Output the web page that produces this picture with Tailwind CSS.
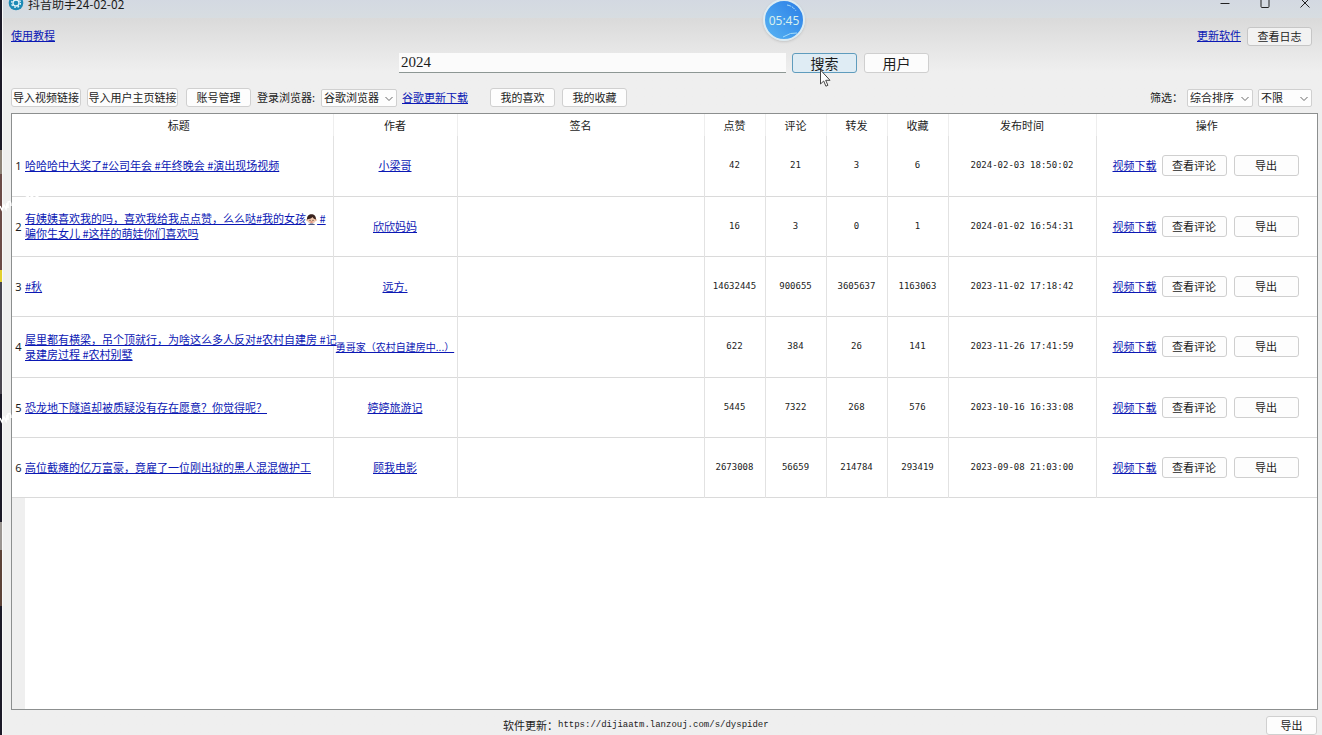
<!DOCTYPE html>
<html lang="zh-CN">
<head>
<meta charset="utf-8">
<meta name="viewport" content="width=device-width, initial-scale=1">
<title>抖音助手24-02-02</title>
<script src="https://cdn.jsdelivr.net/npm/@tailwindcss/browser@4"></script>
</head>
<body class="relative flex h-screen overflow-hidden bg-[#efefef] font-['Noto_Sans_CJK_SC',sans-serif] text-[11px] leading-[15px] text-[#1c1c1c]">
<!-- desktop edge behind the window -->
<div class="flex w-[2px] shrink-0 flex-col bg-[#1c1a28]">
  <div class="h-[150px]"></div><div class="h-6 bg-[#8d8378]"></div><div class="h-24 bg-[#6b4b48]"></div><div class="h-3 bg-[#e2cf2e]"></div><div class="h-28 bg-[#4a4650]"></div><div class="h-32"></div><div class="h-7 bg-[#9a9490]"></div><div class="h-14 bg-[#5d4238]"></div>
</div>
<div class="flex min-w-0 flex-1 flex-col border-l border-[#fafafa]">
  <header class="-mt-3 flex h-[30px] shrink-0 items-center bg-linear-to-b from-[#d1d6e2] to-[#d7dde1] pl-1">
    <svg class="ml-px size-4" viewBox="0 0 16 16" aria-hidden="true"><circle cx="8" cy="8" r="7.3" fill="#1c8ab6"/><circle cx="8" cy="8" r="3" fill="none" stroke="#e8f6fb" stroke-width="1.3"/><circle cx="8" cy="8" r="4.400" fill="none" stroke="#e8f6fb" stroke-width="1.300" stroke-dasharray="1.730 1.730"/></svg>
    <h1 class="ml-1 text-[12px]">抖音助手24-02-02</h1>
    <div class="mr-[-3px] ml-auto flex">
      <button aria-label="最小化" class="flex w-10 justify-center"><svg class="size-3" viewBox="0 0 12 12" fill="none" stroke="#222"><path d="M1.500 6.500h9"/></svg></button>
      <button aria-label="最大化" class="flex w-10 justify-center"><svg class="size-3" viewBox="0 0 12 12" fill="none" stroke="#222"><rect x="2" y="1.500" width="8" height="9" rx="1"/></svg></button>
      <button aria-label="关闭" class="flex w-10 justify-center"><svg class="size-3" viewBox="0 0 12 12" fill="none" stroke="#222"><path d="M1.500 1.500l9 9M10.500 1.500l-9 9"/></svg></button>
    </div>
  </header>
  <div class="flex min-h-0 flex-1 flex-col bg-linear-to-b from-[#dadada] to-[#efefef] to-[54px] pr-1 pl-2">
    <div class="mt-2 flex h-5 shrink-0 items-start pr-[6px]">
      <a href="#" class="leading-[18px] text-[#0b18b4] underline">使用教程</a>
      <a href="#" class="ml-auto leading-[18px] text-[#0b18b4] underline">更新软件</a>
      <button class="mt-px ml-[6px] h-[19px] w-[65px] rounded-[3px] border border-[#c6c6c6] bg-[#f2f2f2]">查看日志</button>
    </div>
    <form class="mt-[7px] ml-[388px] flex h-5 shrink-0 items-center">
      <input aria-label="关键词" value="2024" class="h-5 w-[387px] border-b border-[#8d9794] bg-[#fbfbfb] pl-[2px] font-['Liberation_Serif',serif] text-[15px] outline-none">
      <button type="button" class="ml-[6px] h-5 w-[65px] rounded-[3px] border border-[#5f9cbd] bg-[#dfecf4] text-[14px] leading-[17px]">搜索</button>
      <button type="button" class="ml-[7px] h-5 w-[65px] rounded-[3px] border border-[#cfcfcf] bg-[#fcfcfc] text-[14px] leading-[17px]">用户</button>
    </form>
    <div class="mt-[15px] flex h-[19px] shrink-0 items-center whitespace-nowrap pr-[6px]">
      <button class="h-[19px] w-[70px] rounded-[3px] border border-[#d0d0d0] bg-[#fdfdfd]">导入视频链接</button>
      <button class="ml-[6px] h-[19px] w-[91px] rounded-[3px] border border-[#d0d0d0] bg-[#fdfdfd]">导入用户主页链接</button>
      <button class="ml-[8px] h-[19px] w-[65px] rounded-[3px] border border-[#d0d0d0] bg-[#fdfdfd]">账号管理</button>
      <label for="browser" class="ml-[6px] w-[64px]">登录浏览器:</label>
      <div class="relative"><select id="browser" class="h-[18px] w-[76px] appearance-none rounded-[2px] border border-[#d0d0d0] bg-[#fdfdfd] pl-[2px]"><option>谷歌浏览器</option></select><svg class="pointer-events-none absolute top-[6px] right-1 h-2 w-2" viewBox="0 0 8 8" fill="none" stroke="#666"><path d="M.5 2l3.500 3.500L7.500 2"/></svg></div>
      <a href="#" class="ml-[5px] w-[88px] text-[#0b18b4] underline">谷歌更新下载</a>
      <button class="h-[19px] w-[65px] rounded-[3px] border border-[#d0d0d0] bg-[#fdfdfd]">我的喜欢</button>
      <button class="ml-[7px] h-[19px] w-[65px] rounded-[3px] border border-[#d0d0d0] bg-[#fdfdfd]">我的收藏</button>
      <label for="sort" class="ml-auto">筛选：</label>
      <div class="relative ml-1"><select id="sort" class="h-[18px] w-[66px] appearance-none rounded-[2px] border border-[#d0d0d0] bg-[#fdfdfd] pl-[2px]"><option>综合排序</option></select><svg class="pointer-events-none absolute top-[6px] right-1 h-2 w-2" viewBox="0 0 8 8" fill="none" stroke="#666"><path d="M.5 2l3.500 3.500L7.500 2"/></svg></div>
      <div class="relative ml-[5px]"><select aria-label="时间" class="h-[18px] w-[54px] appearance-none rounded-[2px] border border-[#d0d0d0] bg-[#fdfdfd] pl-[2px]"><option>不限</option></select><svg class="pointer-events-none absolute top-[6px] right-1 h-2 w-2" viewBox="0 0 8 8" fill="none" stroke="#666"><path d="M.5 2l3.500 3.500L7.500 2"/></svg></div>
    </div>
    <main class="mt-[6px] flex min-h-0 flex-1 flex-col border border-[#8c8f8f] bg-white">
      <table class="h-[384px] w-full shrink-0 table-fixed border-collapse text-center [&_tbody_tr]:border-b [&_tbody_tr]:border-[#dadada] [&_td+td+td]:border-l [&_td+td+td]:border-[#e2e2e2] [&_th+th+th]:border-l [&_th+th+th]:border-[#eeeeee]">
        <colgroup><col class="w-[13px]"><col class="w-[308px]"><col class="w-[124px]"><col><col class="w-[61px]"><col class="w-[61px]"><col class="w-[61px]"><col class="w-[61px]"><col class="w-[148px]"><col class="w-[221px]"></colgroup>
        <thead><tr class="h-[22px] [&>th]:font-normal"><th></th><th>标题</th><th>作者</th><th>签名</th><th>点赞</th><th>评论</th><th>转发</th><th>收藏</th><th>发布时间</th><th>操作</th></tr></thead>
        <tbody id="rows"></tbody>
      </table>
      <div class="w-[13px] flex-1 bg-[#efefef]"></div>
    </main>
    <footer class="relative flex h-[25px] shrink-0 items-center pt-[6px] pr-px">
      <p class="ml-[492px] flex items-center">软件更新：<span class="font-['Liberation_Mono',monospace] text-[9px]">https://dijiaatm.lanzouj.com/s/dyspider</span></p>
      <button class="ml-auto h-[19px] w-[51px] rounded-[3px] border border-[#d0d0d0] bg-[#fdfdfd]">导出</button>
    </footer>
  </div>
</div>
<!-- translucent watermark fragments -->
<svg class="pointer-events-none absolute top-[193px] left-0 h-5 w-11" viewBox="0 0 44 20" fill="none" stroke="#fff" stroke-width="1.500" aria-hidden="true"><path d="M0 13l2 4 2-5 2 4 1-6M8 15V9q3-2 3 4M25 5l3-2 1 3 3-3 2 3 3-3 2 2"/></svg>
<svg class="pointer-events-none absolute top-[406px] left-0 h-5 w-11" viewBox="0 0 44 20" fill="none" stroke="#fff" stroke-width="1.500" aria-hidden="true"><path d="M0 12l2 4 2-5 2 4 1-6M8 14V8q3-2 3 4"/></svg>
<!-- floating recorder timer -->
<div class="absolute top-[-1px] left-[763px] flex size-[42px] items-center justify-center rounded-full border-2 border-[#dcebf2] bg-linear-to-tr from-[#58b4f3] to-[#2b7de6] font-['Noto_Sans',sans-serif] text-[12px] text-[#d8f0ee] shadow">05:45
  <svg class="absolute inset-0" viewBox="0 0 38 38" fill="none" stroke="#a5dcf8" aria-hidden="true"><path d="M22 4q6 1 9 6" stroke-dasharray="4 1"/><path d="M18 36q8-5 14-4"/></svg>
</div>
<svg class="absolute top-[69px] left-[819px] h-[19px] w-3" viewBox="0 0 12 19" fill="#fff" stroke="#444" aria-hidden="true"><path d="M1.500 1v14l3.200-3 2.200 5.200 2-.9-2.200-5H11z"/></svg>
<script>
const rows = [
  ['哈哈哈中大奖了#公司年会 #年终晚会 #演出现场视频','小梁哥','42','21','3','6','2024-02-03 18:50:02'],
  ['有姨姨喜欢我的吗，喜欢我给我点点赞，么么哒#我的女孩<svg class="inline size-[11px] align-[-2px]" viewBox="0 0 11 11"><circle cx="1.500" cy="6" r="1.300" fill="#e9b99b"/><circle cx="9.500" cy="6" r="1.300" fill="#e9b99b"/><circle cx="5.500" cy="5.500" r="4" fill="#f3c9ae"/><path d="M1 5.500C.8 2 3 .3 5.500.3S10.200 2 10 5.500C8 5 7 4 6.500 3 5.500 4.500 3 5 1 5.500z" fill="#3a2420"/><path d="M2 11c.5-2 6.500-2 7 0z" fill="#4a5a88"/><circle cx="4" cy="6.300" r=".5"/><circle cx="7" cy="6.300" r=".5"/><path d="M4.500 8h2" stroke="#b33" stroke-width=".7"/></svg> #<br>骗你生女儿 #这样的萌娃你们喜欢吗','欣欣妈妈','16','3','0','1','2024-01-02 16:54:31'],
  ['#秋','远方.','14632445','900655','3605637','1163063','2023-11-02 17:18:42'],
  ['屋里都有横梁，吊个顶就行，为啥这么多人反对#农村自建房 #记<br>录建房过程 #农村别墅','<span class="text-[10px]">勇哥家（农村自建房中...）</span>','622','384','26','141','2023-11-26 17:41:59'],
  ['恐龙地下隧道却被质疑没有存在愿意？你觉得呢？','婷婷旅游记','5445','7322','268','576','2023-10-16 16:33:08'],
  ['高位截瘫的亿万富豪，竟雇了一位刚出狱的黑人混混做护工','顾我电影','2673008','56659','214784','293419','2023-09-08 21:03:00']
];
document.getElementById('rows').innerHTML = rows.map((r, i) =>
  `<tr class="h-[60px]"><td class="font-['Noto_Sans',sans-serif]">${i + 1}</td>
  <td class="text-left whitespace-nowrap"><a href="#" class="text-[#0b18b4] underline">${r[0]}</a></td>
  <td class="whitespace-nowrap"><a href="#" class="text-[#0b18b4] underline">${r[1]}</a></td><td></td>` +
  r.slice(2).map(v => `<td class="font-['DejaVu_Sans_Mono',monospace] text-[9px]">${v}</td>`).join('') +
  `<td><div class="flex items-center pl-4"><a href="#" class="text-[#0b18b4] underline">视频下载</a><button class="ml-[5px] h-[21px] w-[65px] rounded-[3px] border border-[#cfcfcf] bg-[#fdfdfd]">查看评论</button><button class="ml-[7px] h-[21px] w-[65px] rounded-[3px] border border-[#cfcfcf] bg-[#fdfdfd]">导出</button></div></td></tr>`).join('');
</script>
</body>
</html>
